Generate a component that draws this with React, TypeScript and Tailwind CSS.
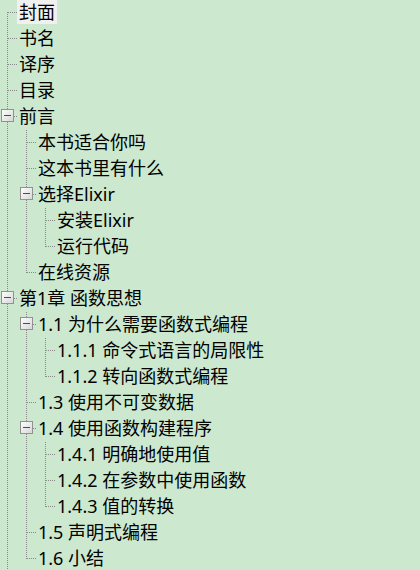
import React from "react";

type Node = { label: string; children?: Node[] };

const tree: Node[] = [
  { label: "封面" },
  { label: "书名" },
  { label: "译序" },
  { label: "目录" },
  {
    label: "前言",
    children: [
      { label: "本书适合你吗" },
      { label: "这本书里有什么" },
      {
        label: "选择Elixir",
        children: [{ label: "安装Elixir" }, { label: "运行代码" }],
      },
      { label: "在线资源" },
    ],
  },
  {
    label: "第1章 函数思想",
    children: [
      {
        label: "1.1 为什么需要函数式编程",
        children: [
          { label: "1.1.1 命令式语言的局限性" },
          { label: "1.1.2 转向函数式编程" },
        ],
      },
      { label: "1.3 使用不可变数据" },
      {
        label: "1.4 使用函数构建程序",
        children: [
          { label: "1.4.1 明确地使用值" },
          { label: "1.4.2 在参数中使用函数" },
          { label: "1.4.3 值的转换" },
        ],
      },
      { label: "1.5 声明式编程" },
      { label: "1.6 小结" },
    ],
  },
];

type Row = {
  label: string;
  ancestors: boolean[];
  first: boolean;
  hasNext: boolean;
  expandable: boolean;
  root: boolean;
};

function flatten(nodes: Node[], ancestors: boolean[], root: boolean, out: Row[]) {
  nodes.forEach((n, i) => {
    const hasNext = root ? true : i < nodes.length - 1;
    out.push({
      label: n.label,
      ancestors,
      first: i === 0,
      hasNext,
      expandable: !!n.children,
      root,
    });
    if (n.children) flatten(n.children, [...ancestors, hasNext], false, out);
  });
  return out;
}

const rows = flatten(tree, [], true, []);

const LINE = "#8a8a8a";

function VLineCell() {
  return (
    <svg width="19" height="26" className="shrink-0" shapeRendering="crispEdges">
      <line x1="7.5" y1="0" x2="7.5" y2="26" stroke={LINE} strokeDasharray="1 1" />
    </svg>
  );
}

function EmptyCell() {
  return <div className="w-[19px] h-[26px] shrink-0" />;
}

function ConnectorCell({ row }: { row: Row }) {
  const topStart = row.root && row.first ? 12 : 0;
  return (
    <svg width="19" height="26" className="shrink-0" shapeRendering="crispEdges">
      <defs>
        <linearGradient id="boxg" x1="0" y1="0" x2="1" y2="1">
          <stop offset="0" stopColor="#ffffff" />
          <stop offset="1" stopColor="#d6d6d6" />
        </linearGradient>
      </defs>
      <line x1="7.5" y1={topStart} x2="7.5" y2="13" stroke={LINE} strokeDasharray="1 1" />
      {row.hasNext && (
        <line x1="7.5" y1="12" x2="7.5" y2="26" stroke={LINE} strokeDasharray="1 1" />
      )}
      <line x1="8" y1="12.5" x2="17" y2="12.5" stroke={LINE} strokeDasharray="1 1" />
      {row.expandable && (
        <g>
          <rect x="1.5" y="5.5" width="12" height="12" fill="url(#boxg)" stroke="#929292" rx="1" />
          <line x1="4" y1="11.5" x2="11" y2="11.5" stroke="#2f4d8f" />
        </g>
      )}
    </svg>
  );
}

export default function App() {
  return (
    <div
      className="w-[420px] h-[570px] overflow-hidden bg-[#cce8cf] text-black"
      style={{ fontFamily: '"Noto Sans", "Noto Sans CJK SC", sans-serif' }}
    >
      <div className="flex flex-col">
        {rows.map((row, idx) => (
          <div key={idx} className="flex h-[26px] items-start">
            {row.ancestors.map((c, j) => (c ? <VLineCell key={j} /> : <EmptyCell key={j} />))}
            <ConnectorCell row={row} />
            <span
              className={
                "-ml-[2px] px-[2px] h-[24px] leading-[24px] text-[18px] whitespace-nowrap " +
                (idx === 0 ? "bg-[#f0f0f0]" : "")
              }
            >
              {row.label}
            </span>
          </div>
        ))}
      </div>
    </div>
  );
}
